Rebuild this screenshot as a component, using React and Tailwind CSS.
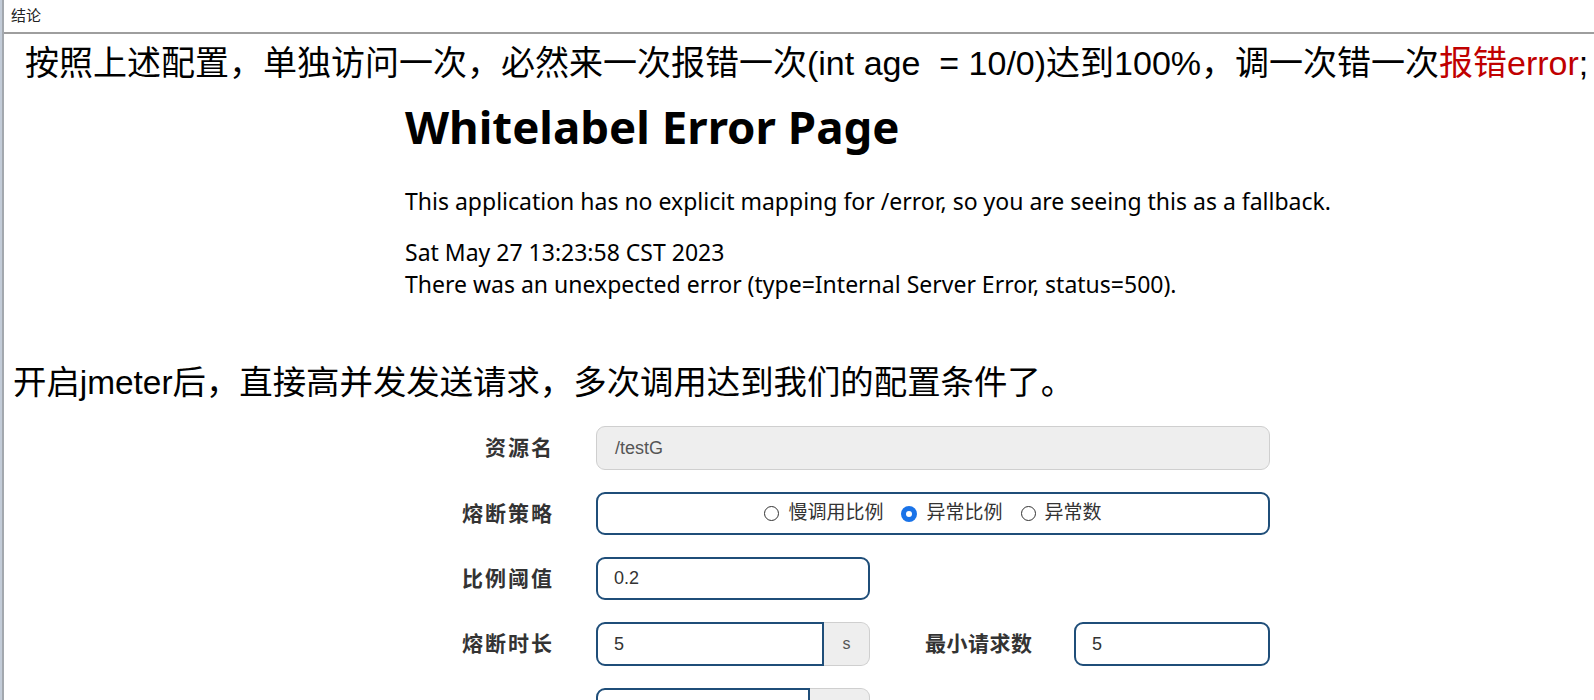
import React from "react";

const cjk = { fontFamily: '"Liberation Sans", "Noto Sans CJK SC", sans-serif' };
const wl = { fontFamily: '"Noto Sans", "Open Sans", sans-serif' };

function Radio({ checked, label }) {
  return (
    <span className="inline-flex items-center gap-[9px]">
      {checked ? (
        <span className="w-[16px] h-[16px] rounded-full bg-[#1a73e8] flex items-center justify-center">
          <span className="w-[6px] h-[6px] rounded-full bg-white" />
        </span>
      ) : (
        <span className="w-[15px] h-[15px] rounded-full border border-[#333] bg-white" />
      )}
      <span>{label}</span>
    </span>
  );
}

function Label({ children }) {
  return (
    <div className="w-[148px] shrink-0 text-right text-[21px] tracking-[2px] font-bold text-[#333]" style={cjk}>
      {children}
    </div>
  );
}

export default function App() {
  return (
    <div className="flex h-[700px] overflow-hidden bg-white text-black">
      <div className="w-[4px] shrink-0 bg-[#c3ccd8] border-r-2 border-[#a3a8ae]" />
      <div className="flex-1 flex flex-col">
        <div className="shrink-0 h-[34px] border-b-2 border-[#9e9e9e] pl-[7px] pt-[7px] text-[15px] leading-[18px] text-[#222]" style={cjk}>
          结论
        </div>
        <div className="shrink-0 pl-[21px] mt-[9px] text-[34px] leading-[40px] whitespace-pre" style={cjk}>
          按照上述配置，单独访问一次，必然来一次报错一次(int age  = 10/0)达到100%，调一次错一次
          <span className="text-[#c00000]">报错error</span>;
        </div>
        <div className="shrink-0 ml-[401px] mt-[13px]" style={wl}>
          <h1 className="text-[45.6px] leading-[60px] font-bold">Whitelabel Error Page</h1>
          <p className="mt-[30px] text-[23px] leading-[30px]">
            This application has no explicit mapping for /error, so you are seeing this as a fallback.
          </p>
          <div className="mt-[20px] text-[23px] leading-[32px]">
            <div>Sat May 27 13:23:58 CST 2023</div>
            <div>There was an unexpected error (type=Internal Server Error, status=500).</div>
          </div>
        </div>
        <div className="shrink-0 pl-[9px] mt-[63px] text-[33.4px] leading-[40px]" style={cjk}>
          开启jmeter后，直接高并发发送请求，多次调用达到我们的配置条件了。
        </div>
        <div className="shrink-0 mt-[23px] flex flex-col gap-[22px]" style={cjk}>
          <div className="flex items-center shrink-0">
            <div className="w-[402px] shrink-0" />
            <Label>资源名</Label>
            <div className="ml-[42px] w-[674px] h-[44px] rounded-[9px] border border-[#cfcfcf] bg-[#eeeeee] flex items-center pl-[18px] text-[18px] text-[#555]">
              /testG
            </div>
          </div>
          <div className="flex items-center shrink-0">
            <div className="w-[402px] shrink-0" />
            <Label>熔断策略</Label>
            <div className="ml-[42px] w-[674px] h-[43px] rounded-[9px] border-2 border-[#1f4e79] bg-white flex items-center justify-center gap-[18px] text-[19px] text-[#333]">
              <Radio label="慢调用比例" />
              <Radio checked label="异常比例" />
              <Radio label="异常数" />
            </div>
          </div>
          <div className="flex items-center shrink-0">
            <div className="w-[402px] shrink-0" />
            <Label>比例阈值</Label>
            <div className="ml-[42px] w-[274px] h-[43px] rounded-[9px] border-2 border-[#1f4e79] bg-white flex items-center pl-[16px] text-[18px] text-[#333]">
              0.2
            </div>
          </div>
          <div className="flex items-center shrink-0">
            <div className="w-[402px] shrink-0" />
            <Label>熔断时长</Label>
            <div className="ml-[42px] flex h-[44px]">
              <div className="w-[228px] rounded-l-[9px] border-2 border-[#1f4e79] bg-white flex items-center pl-[16px] text-[18px] text-[#333]">5</div>
              <div className="w-[46px] rounded-r-[9px] border border-l-0 border-[#cfcfcf] bg-[#eeeeee] flex items-center justify-center text-[16px] text-[#555]">s</div>
            </div>
            <div className="ml-[55px] w-[109px] text-[21px] tracking-[0.5px] font-bold text-[#333] whitespace-nowrap">最小请求数</div>
            <div className="ml-[40px] w-[196px] h-[44px] rounded-[9px] border-2 border-[#1f4e79] bg-white flex items-center pl-[16px] text-[18px] text-[#333]">5</div>
          </div>
          <div className="flex items-start shrink-0">
            <div className="w-[402px] shrink-0" />
            <div className="w-[148px] shrink-0" />
            <div className="ml-[42px] flex h-[44px]">
              <div className="w-[214px] rounded-l-[9px] border-2 border-[#1f4e79] bg-white" />
              <div className="w-[60px] rounded-r-[9px] border border-l-0 border-[#cfcfcf] bg-[#eeeeee]" />
            </div>
          </div>
        </div>
      </div>
    </div>
  );
}
